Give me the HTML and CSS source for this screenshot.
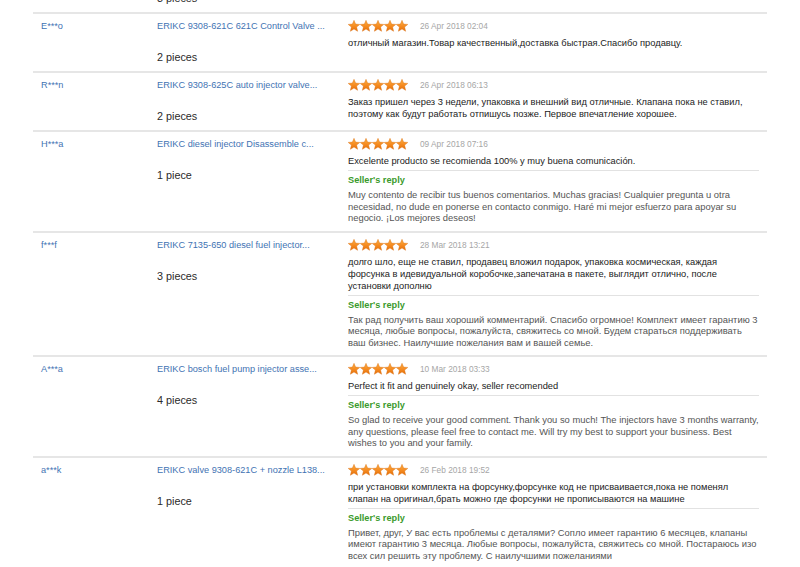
FILE: index.html
```html
<html lang="en">
<head>
    <meta charset="UTF-8">
    <meta name="viewport" content="width=device-width, initial-scale=1.0">
    <title>Feedback</title>
    <link rel="stylesheet" href="styles.css">
</head>

<body>
    <svg class="defs" width="0" height="0" aria-hidden="true">
        <defs>
            <linearGradient id="starFill" x1="0" y1="0" x2="0" y2="1">
                <stop offset="0" stop-color="#fcb24a"/>
                <stop offset="0.55" stop-color="#f58a1f"/>
                <stop offset="1" stop-color="#e4700c"/>
            </linearGradient>
            <symbol id="star" viewBox="0 0 12 12">
                <polygon points="6,0.3 7.6,4.1 11.8,4.4 8.6,7.1 9.6,11.3 6,9 2.4,11.3 3.4,7.1 0.2,4.4 4.4,4.1" fill="url(#starFill)" stroke="#d9690a" stroke-width="0.4"/>
            </symbol>
        </defs>
    </svg>

    <div class="feedback-list">

        <div class="row stub">
            <div class="buyer"></div>
            <div class="product">
                <div class="prod-name"></div>
                <div class="pieces">3 pieces</div>
            </div>
            <div class="review"></div>
        </div>

        <div class="row">
            <div class="buyer"><a href="#">E***o</a></div>
            <div class="product">
                <div class="prod-name"><a href="#">ERIKC 9308-621C 621C Control Valve ...</a></div>
                <div class="pieces">2 pieces</div>
            </div>
            <div class="review">
                <div class="rating">
                    <svg class="stars" viewBox="0 0 60 12"><use href="#star" width="12" height="12"/><use href="#star" x="12" width="12" height="12"/><use href="#star" x="24" width="12" height="12"/><use href="#star" x="36" width="12" height="12"/><use href="#star" x="48" width="12" height="12"/></svg>
                    <span class="date">26 Apr 2018 02:04</span>
                </div>
                <div class="comment">отличный магазин.Товар качественный,доставка быстрая.Спасибо продавцу.</div>
            </div>
        </div>

        <div class="row">
            <div class="buyer"><a href="#">R***n</a></div>
            <div class="product">
                <div class="prod-name"><a href="#">ERIKC 9308-625C auto injector valve...</a></div>
                <div class="pieces">2 pieces</div>
            </div>
            <div class="review">
                <div class="rating">
                    <svg class="stars" viewBox="0 0 60 12"><use href="#star" width="12" height="12"/><use href="#star" x="12" width="12" height="12"/><use href="#star" x="24" width="12" height="12"/><use href="#star" x="36" width="12" height="12"/><use href="#star" x="48" width="12" height="12"/></svg>
                    <span class="date">26 Apr 2018 06:13</span>
                </div>
                <div class="comment">Заказ пришел через 3 недели, упаковка и внешний вид отличные. Клапана пока не ставил, поэтому как будут работать отпишусь позже. Первое впечатление хорошее.</div>
            </div>
        </div>

        <div class="row">
            <div class="buyer"><a href="#">H***a</a></div>
            <div class="product">
                <div class="prod-name"><a href="#">ERIKC diesel injector Disassemble c...</a></div>
                <div class="pieces">1 piece</div>
            </div>
            <div class="review">
                <div class="rating">
                    <svg class="stars" viewBox="0 0 60 12"><use href="#star" width="12" height="12"/><use href="#star" x="12" width="12" height="12"/><use href="#star" x="24" width="12" height="12"/><use href="#star" x="36" width="12" height="12"/><use href="#star" x="48" width="12" height="12"/></svg>
                    <span class="date">09 Apr 2018 07:16</span>
                </div>
                <div class="comment">Excelente producto se recomienda 100% y muy buena comunicación.</div>
                <div class="reply">
                    <div class="reply-title">Seller's reply</div>
                    <div class="reply-text">Muy contento de recibir tus buenos comentarios. Muchas gracias! Cualquier pregunta u otra necesidad, no dude en ponerse en contacto conmigo. Haré mi mejor esfuerzo para apoyar su negocio. ¡Los mejores deseos!</div>
                </div>
            </div>
        </div>

        <div class="row">
            <div class="buyer"><a href="#">f***f</a></div>
            <div class="product">
                <div class="prod-name"><a href="#">ERIKC 7135-650 diesel fuel injector...</a></div>
                <div class="pieces">3 pieces</div>
            </div>
            <div class="review">
                <div class="rating">
                    <svg class="stars" viewBox="0 0 60 12"><use href="#star" width="12" height="12"/><use href="#star" x="12" width="12" height="12"/><use href="#star" x="24" width="12" height="12"/><use href="#star" x="36" width="12" height="12"/><use href="#star" x="48" width="12" height="12"/></svg>
                    <span class="date">28 Mar 2018 13:21</span>
                </div>
                <div class="comment">долго шло, еще не ставил, продавец вложил подарок, упаковка космическая, каждая форсунка в идевидуальной коробочке,запечатана в пакете, выглядит отлично, после установки дополню</div>
                <div class="reply">
                    <div class="reply-title">Seller's reply</div>
                    <div class="reply-text">Так рад получить ваш хороший комментарий. Спасибо огромное! Комплект имеет гарантию 3 месяца, любые вопросы, пожалуйста, свяжитесь со мной. Будем стараться поддерживать ваш бизнес. Наилучшие пожелания вам и вашей семье.</div>
                </div>
            </div>
        </div>

        <div class="row">
            <div class="buyer"><a href="#">A***a</a></div>
            <div class="product">
                <div class="prod-name"><a href="#">ERIKC bosch fuel pump injector asse...</a></div>
                <div class="pieces">4 pieces</div>
            </div>
            <div class="review">
                <div class="rating">
                    <svg class="stars" viewBox="0 0 60 12"><use href="#star" width="12" height="12"/><use href="#star" x="12" width="12" height="12"/><use href="#star" x="24" width="12" height="12"/><use href="#star" x="36" width="12" height="12"/><use href="#star" x="48" width="12" height="12"/></svg>
                    <span class="date">10 Mar 2018 03:33</span>
                </div>
                <div class="comment">Perfect it fit and genuinely okay, seller recomended</div>
                <div class="reply">
                    <div class="reply-title">Seller's reply</div>
                    <div class="reply-text">So glad to receive your good comment. Thank you so much! The injectors have 3 months warranty, any questions, please feel free to contact me. Will try my best to support your business. Best wishes to you and your family.</div>
                </div>
            </div>
        </div>

        <div class="row">
            <div class="buyer"><a href="#">a***k</a></div>
            <div class="product">
                <div class="prod-name"><a href="#">ERIKC valve 9308-621C + nozzle L138...</a></div>
                <div class="pieces">1 piece</div>
            </div>
            <div class="review">
                <div class="rating">
                    <svg class="stars" viewBox="0 0 60 12"><use href="#star" width="12" height="12"/><use href="#star" x="12" width="12" height="12"/><use href="#star" x="24" width="12" height="12"/><use href="#star" x="36" width="12" height="12"/><use href="#star" x="48" width="12" height="12"/></svg>
                    <span class="date">26 Feb 2018 19:52</span>
                </div>
                <div class="comment">при установки комплекта на форсунку,форсунке код не присваивается,пока не поменял клапан на оригинал,брать можно где форсунки не прописываются на машине</div>
                <div class="reply">
                    <div class="reply-title">Seller's reply</div>
                    <div class="reply-text">Привет, друг, У вас есть проблемы с деталями? Сопло имеет гарантию 6 месяцев, клапаны имеют гарантию 3 месяца. Любые вопросы, пожалуйста, свяжитесь со мной. Постараюсь изо всех сил решить эту проблему. С наилучшими пожеланиями</div>
                </div>
            </div>
        </div>

    </div>
</body>
</html>
```

FILE: styles.css
```css
* {
    margin: 0;
    padding: 0;
    box-sizing: border-box;
    font-family: "Liberation Sans", Arial, sans-serif;
}

body {
    background: #fff;
    overflow: hidden;
}

.defs {
    display: block;
    width: 0;
    height: 0;
}

a {
    color: #3f73b3;
    text-decoration: none;
}

.feedback-list {
    margin-top: -47px;
    margin-left: 33px;
    width: 734px;
}

.row {
    display: grid;
    grid-template-columns: 124px 191px 1fr;
    border-top: 2px solid #e6e6e6;
    padding: 6px 0 7px;
}

.stub {
    border-top-color: transparent;
}

.buyer {
    padding-left: 8px;
    font-size: 9.2px;
    line-height: 12px;
}

.prod-name {
    height: 12px;
    font-size: 9.2px;
    line-height: 12px;
    white-space: nowrap;
}

.pieces {
    margin-top: 18px;
    font-size: 10.8px;
    line-height: 14px;
    color: #2b2b2b;
}

.review {
    padding-right: 8px;
}

.rating {
    display: flex;
    align-items: center;
    height: 12px;
}

.stars {
    width: 60px;
    height: 12px;
}

.date {
    margin-left: 12px;
    font-size: 8.3px;
    color: #a6a6a6;
}

.comment {
    margin-top: 5px;
    font-size: 9.3px;
    line-height: 12px;
    color: #222;
}

.reply {
    margin-top: 3px;
    border-top: 1px solid #e2e2e2;
    padding-top: 3px;
}

.reply-title {
    font-size: 9.2px;
    font-weight: bold;
    line-height: 12px;
    color: #3a9a2c;
}

.reply-text {
    margin-top: 3px;
    font-size: 9.4px;
    line-height: 11.5px;
    color: #555;
}
```
